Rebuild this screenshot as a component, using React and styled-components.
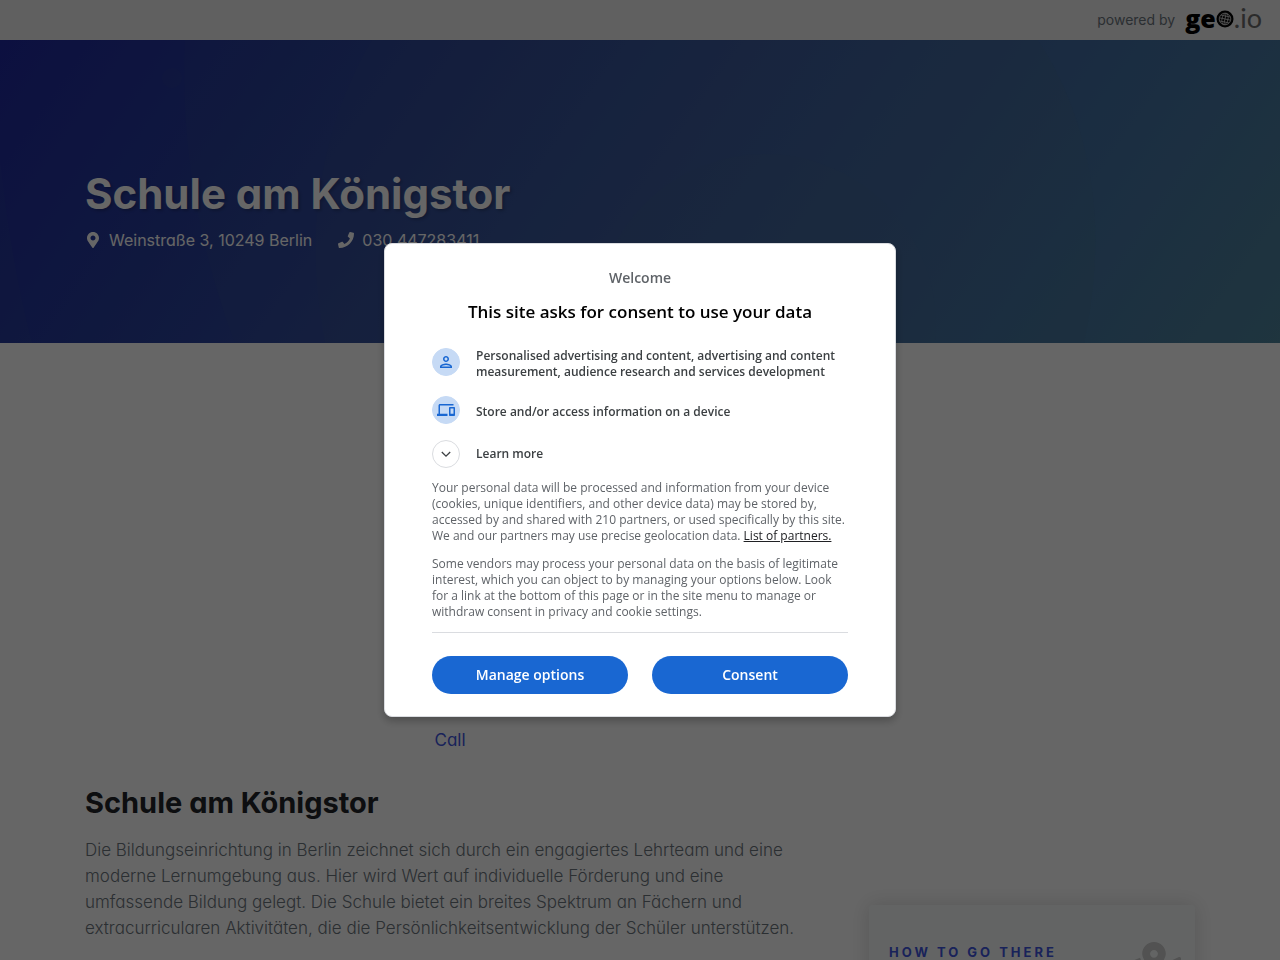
import styled, { createGlobalStyle } from 'styled-components';
import { FaMapMarkerAlt, FaPhone, FaMapMarkedAlt } from 'react-icons/fa';
import { MdOutlinePerson, MdOutlineDevices } from 'react-icons/md';

const GlobalStyle = createGlobalStyle`
  * {
    box-sizing: border-box;
  }

  html,
  body,
  #root {
    height: 100%;
  }

  body {
    margin: 0;
    overflow: hidden;
    background: #fff;
    color: #6c757d;
    font-family: Inter, 'Open Sans', sans-serif;
    font-feature-settings: 'cv11';
    font-size: 16px;
    line-height: 26px;
  }

  h1,
  h2,
  h3,
  p {
    margin: 0;
  }

  a {
    color: inherit;
    text-decoration: none;
  }
`;

const GlobeIcon = () => (
  <svg width="18" height="18" viewBox="0 0 18 18" fill="none" aria-hidden="true">
    <circle cx="9" cy="9" r="8.5" fill="#000" />
    <g stroke="#c4c4c4" strokeWidth="0.9" transform="rotate(12 9 9)">
      <circle cx="9" cy="9" r="5.8" />
      <path d="M3.2 9h11.6M4.2 6h9.6M4.2 12h9.6M9 3.2v11.6" />
      <ellipse cx="9" cy="9" rx="3" ry="5.8" />
    </g>
  </svg>
);

const ChevronIcon = () => (
  <svg width="18" height="18" viewBox="0 0 18 18" fill="none" aria-hidden="true">
    <path d="M4.8 7L9 11.2L13.2 7" stroke="currentColor" strokeWidth="1.3" />
  </svg>
);

const App = () => {
  return (
    <>
      <GlobalStyle />
      <Page>
        <TopBar>
          <span>powered by</span>
          <Logo href="#home" aria-label="geo.io">
            <LogoBold>ge</LogoBold>
            <GlobeIcon />
            <LogoLight>.io</LogoLight>
          </Logo>
        </TopBar>

        <Hero>
          <HeroShapes viewBox="0 0 1280 303" preserveAspectRatio="none" aria-hidden="true">
            <path d="M0 120C8 190 18 250 32 303H0z" />
            <path d="M185 0C180 110 200 210 235 303H1084C1110 180 1090 80 1038 0z" />
            <path d="M372 0C315 100 305 200 325 303H1084C1110 180 1090 80 1038 0z" />
            <circle cx="765" cy="285" r="171" />
            <circle cx="172" cy="38" r="10" />
          </HeroShapes>
          <Container>
            <HeroTitle>Schule am Königstor</HeroTitle>
            <Contacts>
              <Contact>
                <FaMapMarkerAlt />
                Weinstraße 3, 10249 Berlin
              </Contact>
              <Contact>
                <FaPhone />
                <a href="tel:030447283411">030 447283411</a>
              </Contact>
            </Contacts>
          </Container>
        </Hero>

        <Content>
          <Main>
            <CallLink href="tel:030447283411">
              <CallCircle>
                <FaPhone />
              </CallCircle>
              Call
            </CallLink>
            <SectionTitle>Schule am Königstor</SectionTitle>
            <Description>
              Die Bildungseinrichtung in Berlin zeichnet sich durch ein engagiertes Lehrteam und eine
              <br />
              moderne Lernumgebung aus. Hier wird Wert auf individuelle Förderung und eine
              <br />
              umfassende Bildung gelegt. Die Schule bietet ein breites Spektrum an Fächern und
              <br />
              extracurricularen Aktivitäten, die die Persönlichkeitsentwicklung der Schüler unterstützen.
            </Description>
          </Main>
          <RouteCard>
            <CardTitle>HOW TO GO THERE</CardTitle>
            <CardIcon />
          </RouteCard>
        </Content>
      </Page>

      <Overlay>
        <Dialog role="dialog" aria-modal="true" aria-labelledby="consent-title">
          <Welcome>Welcome</Welcome>
          <DialogTitle id="consent-title">This site asks for consent to use your data</DialogTitle>

          <Purposes>
            <Purpose>
              <PurposeIcon>
                <MdOutlinePerson size={18} />
              </PurposeIcon>
              <PurposeText>
                Personalised advertising and content, advertising and content measurement, audience
                research and services development
              </PurposeText>
            </Purpose>
            <Purpose>
              <PurposeIcon>
                <MdOutlineDevices size={18} />
              </PurposeIcon>
              <PurposeText>Store and/or access information on a device</PurposeText>
            </Purpose>
          </Purposes>
          <LearnMore type="button">
            <PurposeIcon $outlined>
              <ChevronIcon />
            </PurposeIcon>
            <span>Learn more</span>
          </LearnMore>

          <Legal>
            <p>
              Your personal data will be processed and information from your device (cookies, unique
              identifiers, and other device data) may be stored by, accessed by and shared with 210
              partners, or used specifically by this site. We and our partners may use precise
              geolocation data. <PartnersLink href="#partners">List of partners.</PartnersLink>
            </p>
            <p>
              Some vendors may process your personal data on the basis of legitimate interest, which
              you can object to by managing your options below. Look for a link at the bottom of this
              page or in the site menu to manage or withdraw consent in privacy and cookie settings.
            </p>
          </Legal>

          <Actions>
            <ActionButton type="button">Manage options</ActionButton>
            <ActionButton type="button">Consent</ActionButton>
          </Actions>
        </Dialog>
      </Overlay>
    </>
  );
};

const Page = styled.div`
  height: 100%;
  overflow: hidden;
`;

const TopBar = styled.header`
  display: flex;
  align-items: center;
  justify-content: flex-end;
  gap: 10px;
  height: 40px;
  padding: 0 18px;
  background: #f0f0f0;
  font-size: 14px;
`;

const Logo = styled.a`
  display: flex;
  align-items: baseline;
  padding-bottom: 4px;
  color: #000;
  font-family: 'Open Sans', sans-serif;
  font-size: 25px;
  line-height: 36px;
`;

const LogoBold = styled.span`
  font-weight: 800;
`;

const LogoLight = styled.span`
  color: #6c6c6c;
  font-family: Lato, sans-serif;
  font-size: 27px;
`;

const Hero = styled.section`
  position: relative;
  height: 303px;
  padding-top: 128px;
  background: linear-gradient(
    125deg,
    #2029a0 0%,
    #273d9c 20%,
    #3a58a0 50%,
    #4473a4 80%,
    #4e849c 100%
  );
  color: #fff;
`;

const HeroShapes = styled.svg`
  position: absolute;
  inset: 0;
  width: 100%;
  height: 100%;
  fill: rgba(90, 120, 130, 0.06);
`;

const Container = styled.div`
  position: relative;
  max-width: 1140px;
  margin: 0 auto;
  padding: 0 15px;
`;

const HeroTitle = styled.h1`
  font-size: 42px;
  font-weight: 700;
  line-height: 52px;
  text-shadow: 2px 2px 3px rgba(0, 0, 0, 0.2);
`;

const Contacts = styled.div`
  display: flex;
  gap: 26px;
  padding-top: 7px;
`;

const Contact = styled.div`
  display: flex;
  align-items: center;
  gap: 8px;
`;

const Content = styled.div`
  display: grid;
  grid-template-columns: minmax(0, 730px) 326px;
  justify-content: space-between;
  align-items: start;
  max-width: 1140px;
  margin: 0 auto;
  padding: 320px 15px 0;
`;

const Main = styled.main`
  display: flex;
  flex-direction: column;
`;

const CallLink = styled.a`
  display: flex;
  flex-direction: column;
  align-items: center;
  gap: 10px;
  color: #4056e0;
  font-size: 17px;
`;

const CallCircle = styled.span`
  display: flex;
  align-items: center;
  justify-content: center;
  width: 54px;
  height: 54px;
  border-radius: 50%;
  background: #4056e0;
  color: #fff;
`;

const SectionTitle = styled.h2`
  padding: 32px 0 16px;
  color: #212529;
  font-size: 29px;
  font-weight: 700;
  line-height: 36px;
`;

const Description = styled.p`
  font-size: 17px;
  font-weight: 300;
`;

const RouteCard = styled.aside`
  display: flex;
  justify-content: space-between;
  align-items: flex-start;
  height: 200px;
  margin-top: 242px;
  padding: 37px 14px 0 20px;
  border-radius: 4px;
  background: #f8fbfa;
  box-shadow: 0 0 20px rgba(0, 0, 0, 0.15);
`;

const CardTitle = styled.h3`
  color: #4056e0;
  font-size: 13px;
  font-weight: 700;
  line-height: 20px;
  letter-spacing: 3px;
`;

const CardIcon = styled(FaMapMarkedAlt)`
  width: 54px;
  height: 48px;
  color: #ccc;
`;

const Overlay = styled.div`
  position: fixed;
  inset: 0;
  display: flex;
  align-items: center;
  justify-content: center;
  background: rgba(0, 0, 0, 0.6);
`;

const Dialog = styled.div`
  width: 100%;
  max-width: 512px;
  padding: 24px 47px 22px;
  border: 1px solid #dadce0;
  border-radius: 8px;
  background: #fff;
  box-shadow: 0 4px 8px rgba(0, 0, 0, 0.25);
  color: #3c4043;
  font-family: 'Open Sans', sans-serif;
  font-size: 12px;
  line-height: 16px;
`;

const Welcome = styled.p`
  color: #5f6368;
  font-size: 14px;
  font-weight: 600;
  line-height: 20px;
  text-align: center;
`;

const DialogTitle = styled.h2`
  padding: 12px 0 24px;
  color: #000;
  font-size: 17px;
  font-weight: 600;
  line-height: 24px;
  text-align: center;
`;

const Purposes = styled.div`
  display: flex;
  flex-direction: column;
  gap: 16px;
  padding-bottom: 12px;
`;

const Purpose = styled.div`
  display: flex;
  align-items: flex-start;
  gap: 16px;
`;

const PurposeText = styled.span`
  display: flex;
  align-items: center;
  min-height: 32px;
  font-weight: 600;
`;

const LearnMore = styled.button`
  display: flex;
  align-items: center;
  gap: 16px;
  padding: 0;
  border: 0;
  background: none;
  color: inherit;
  font: inherit;
  font-weight: 600;
  cursor: pointer;
`;

const PurposeIcon = styled.span`
  display: flex;
  flex: none;
  align-items: center;
  justify-content: center;
  width: 28px;
  height: 28px;
  border: 1px solid ${(props) => (props.$outlined ? '#dadce0' : '#c6daf5')};
  border-radius: 50%;
  background: ${(props) => (props.$outlined ? '#fff' : '#c6daf5')};
  color: ${(props) => (props.$outlined ? '#3c4043' : '#1967d2')};
`;

const Legal = styled.div`
  display: flex;
  flex-direction: column;
  gap: 12px;
  padding: 12px 0;
  border-bottom: 1px solid #dadce0;
  color: #5f6368;
`;

const PartnersLink = styled.a`
  color: #202124;
  text-decoration: underline;
`;

const Actions = styled.div`
  display: grid;
  grid-template-columns: 1fr 1fr;
  gap: 24px;
  padding-top: 23px;
`;

const ActionButton = styled.button`
  height: 38px;
  padding: 0 16px 2px;
  border: 0;
  border-radius: 19px;
  background: #1967d2;
  color: #fff;
  font-family: inherit;
  font-size: 14px;
  font-weight: 600;
  cursor: pointer;
`;

export default App;
